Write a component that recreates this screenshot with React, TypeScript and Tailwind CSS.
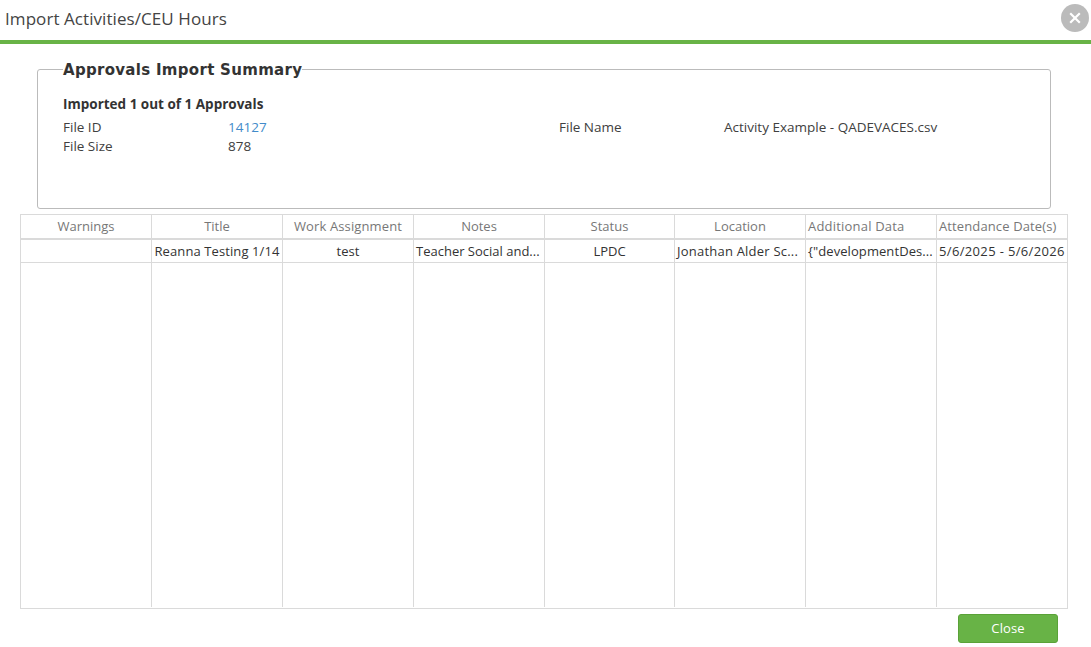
import React from 'react';
import clsx from 'clsx';

interface Column {
  title: string;
  value: string;
  align?: 'left' | 'center';
  titleSpacing?: string;
  valueSpacing?: string;
}

const columns: Column[] = [
  { title: 'Warnings', value: '' },
  { title: 'Title', value: 'Reanna Testing 1/14', valueSpacing: 'tracking-[0.1px]' },
  { title: 'Work Assignment', value: 'test', titleSpacing: 'tracking-[0.13px]' },
  { title: 'Notes', value: 'Teacher Social and...', align: 'left' },
  { title: 'Status', value: 'LPDC' },
  { title: 'Location', value: 'Jonathan Alder Sc...', align: 'left', valueSpacing: 'tracking-[0.22px]' },
  {
    title: 'Additional Data',
    value: '{"developmentDes...',
    align: 'left',
    titleSpacing: 'tracking-[0.2px]',
    valueSpacing: 'tracking-[0.08px]',
  },
  {
    title: 'Attendance Date(s)',
    value: '5/6/2025 - 5/6/2026',
    align: 'left',
    titleSpacing: 'tracking-[0.12px]',
    valueSpacing: 'tracking-[0.35px]',
  },
];

const gridColumns = 'grid grid-cols-[131px_131px_131px_131px_130px_131px_131px_130px]';

const cellBorder = (index: number) => index < columns.length - 1 && 'border-r border-[#dadada]';

const Header: React.FC = () => (
  <header className="flex h-11 items-start justify-between border-b-4 border-[#68b346] pl-[5px] pr-[2px]">
    <h1 className="mt-[6px] text-[17px] leading-[26px] tracking-[0.07px] text-[#444444]">Import Activities/CEU Hours</h1>
    <button aria-label="Close dialog" className="mt-1 flex size-7 items-center justify-center rounded-full bg-[#bbbbbb]">
      <svg width="12" height="12" viewBox="0 0 12 12" stroke="white" strokeWidth="2.2">
        <path d="M1.2 1.2 10.8 10.8M10.8 1.2 1.2 10.8" />
      </svg>
    </button>
  </header>
);

const Summary: React.FC = () => (
  <fieldset className="ml-[37px] mt-4 h-[149px] w-[1014px] rounded-[3px] border border-[#bbbbbb] pl-[25px]">
    <legend className="pt-0.5 font-['DejaVu_Sans'] text-[15px] font-bold leading-[17px] tracking-[0.3px] text-[#333333]">
      Approvals Import Summary
    </legend>
    <p className="mt-[15px] text-[13.5px] font-bold leading-5 text-[#333333]">Imported 1 out of 1 Approvals</p>
    <div className="mt-1 grid grid-cols-[165px_331px_165px_1fr] text-[13.5px] leading-[19px] text-[#404040]">
      <span>File ID</span>
      <a className="text-[#428bca]">14127</a>
      <span>File Name</span>
      <span>Activity Example - QADEVACES.csv</span>
      <span>File Size</span>
      <span>878</span>
    </div>
  </fieldset>
);

const ApprovalsTable: React.FC = () => (
  <div className="ml-5 mt-[5px] flex h-[395px] w-[1048px] flex-col border border-[#dadada] text-[13px]">
    <div className={clsx(gridColumns, 'h-[25px] border-b-2 border-[#dadada] leading-[23px] text-[#777777]')}>
      {columns.map((column, index) => (
        <div
          key={column.title}
          className={clsx('whitespace-nowrap', index > 5 ? 'pl-0.5' : 'text-center', cellBorder(index))}
        >
          <span className={column.titleSpacing}>{column.title}</span>
        </div>
      ))}
    </div>
    <div className={clsx(gridColumns, 'h-[23px] border-b border-[#dadada] leading-[22px] text-[#333333]')}>
      {columns.map((column, index) => (
        <div
          key={column.title}
          className={clsx('whitespace-nowrap', column.align === 'left' ? 'pl-0.5' : 'text-center', cellBorder(index))}
        >
          <span className={column.valueSpacing}>{column.value}</span>
        </div>
      ))}
    </div>
    <div className={clsx(gridColumns, 'mb-px flex-1')}>
      {columns.map((column, index) => (
        <div key={column.title} className={clsx(cellBorder(index))} />
      ))}
    </div>
  </div>
);

const App: React.FC = () => (
  <div className="h-[647px] w-[1091px] overflow-hidden bg-white font-['Open_Sans',sans-serif]">
    <Header />
    <Summary />
    <ApprovalsTable />
    <div className="mr-[33px] mt-[5px] flex justify-end">
      <button className="h-[29px] w-[100px] rounded-[3px] border border-[#5aa238] bg-[#68b346] text-[13px] leading-[27px] tracking-[0.1px] text-white">
        Close
      </button>
    </div>
  </div>
);

export default App;
